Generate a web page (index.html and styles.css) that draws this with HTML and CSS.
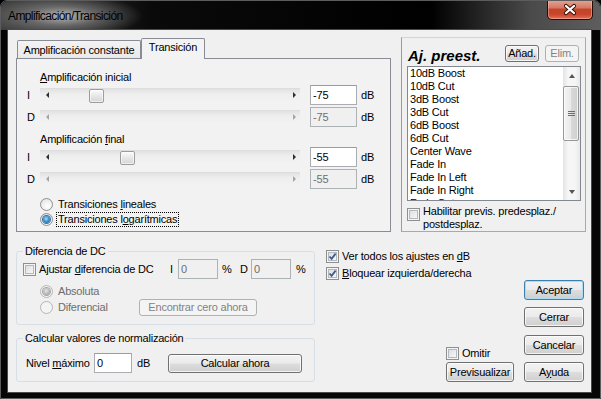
FILE: index.html
```html
<!DOCTYPE html>
<html>
<head>
<meta charset="utf-8">
<link rel="stylesheet" href="styles.css">
</head>
<body>
<div class="window">
  <div class="titlebar">
    <span class="title">Amplificación/Transición</span>
    <div class="close">
      <svg width="16" height="13" viewBox="0 0 16 13"><path d="M4 3 L12 10 M12 3 L4 10" stroke="#3a1208" stroke-width="4.2" stroke-linecap="round"/><path d="M4 3 L12 10 M12 3 L4 10" stroke="#ffffff" stroke-width="2.3" stroke-linecap="round"/></svg>
    </div>
  </div>
  <div class="client">
    <div class="top">
      <div class="tabctl">
        <div class="tabstrip">
          <div class="tab">Amplificación constante</div>
          <div class="tab sel">Transición</div>
        </div>
        <div class="pane">
          <div class="lbl"><u>A</u>mplificación inicial</div>
          <div class="srow">
            <span class="ch">I</span>
            <div class="track"><span class="arr l"></span><span class="thumb" style="left:49px"></span><span class="arr r"></span></div>
            <input class="edit" value="-75">
            <span class="unit">dB</span>
          </div>
          <div class="srow dis">
            <span class="ch">D</span>
            <div class="track"><span class="arr l"></span><span class="arr r"></span></div>
            <input class="edit" value="-75" disabled>
            <span class="unit">dB</span>
          </div>
          <div class="lbl lbl2">Amplificación <u>f</u>inal</div>
          <div class="srow">
            <span class="ch">I</span>
            <div class="track"><span class="arr l"></span><span class="thumb" style="left:80px"></span><span class="arr r"></span></div>
            <input class="edit" value="-55">
            <span class="unit">dB</span>
          </div>
          <div class="srow dis">
            <span class="ch">D</span>
            <div class="track"><span class="arr l"></span><span class="arr r"></span></div>
            <input class="edit" value="-55" disabled>
            <span class="unit">dB</span>
          </div>
          <div class="rrow first"><span class="rb"></span><span class="rtext">Transiciones <u>l</u>ineales</span></div>
          <div class="rrow"><span class="rb on"></span><span class="rtext focus">Transiciones l<u>o</u>garítmicas</span></div>
        </div>
      </div>
      <div class="preset">
        <div class="phead">
          <span class="ptitle">Aj. preest.</span>
          <button class="btn sm">Añad.</button>
          <button class="btn sm dis">Elim.</button>
        </div>
        <div class="listbox">
          <div class="items">
            <div>10dB Boost</div>
            <div>10dB Cut</div>
            <div>3dB Boost</div>
            <div>3dB Cut</div>
            <div>6dB Boost</div>
            <div>6dB Cut</div>
            <div>Center Wave</div>
            <div>Fade In</div>
            <div>Fade In Left</div>
            <div>Fade In Right</div>
            <div>Fade Out</div>
          </div>
          <div class="vscroll">
            <div class="sbtn"><span class="up"></span></div>
            <div class="sthumb"><span class="grip"></span></div>
            <div class="sfill"></div>
            <div class="sbtn"><span class="down"></span></div>
          </div>
        </div>
        <div class="cbrow multi"><span class="cb"><span class="cbi"></span></span><span class="cbtext">Habilitar previs. predesplaz./<br>postdesplaz.</span></div>
      </div>
    </div>
    <div class="bottom">
      <div class="groups">
        <fieldset class="grp dc">
          <legend>Diferencia de DC</legend>
          <div class="dcrow">
            <span class="cbrow dccheck"><span class="cb"><span class="cbi"></span></span><span class="cbtext">Ajustar <u>d</u>iferencia de DC</span></span>
            <span class="dcl">I</span>
            <input class="edit pct" value="0" disabled>
            <span class="pctl">%</span>
            <span class="dcd">D</span>
            <input class="edit pct" value="0" disabled>
            <span class="pctl2">%</span>
          </div>
          <div class="rrow dis r2"><span class="rb on"></span><span class="rtext">Absoluta</span></div>
          <div class="rrow dis r3"><span class="rb"></span><span class="rtext wide">Diferencial</span><button class="btn dis find">Encontrar cero ahora</button></div>
        </fieldset>
        <fieldset class="grp norm">
          <legend>Calcular valores de normalización</legend>
          <div class="nrow">
            <span class="nlabel">Nivel <u>m</u>áximo</span>
            <input class="edit nval" value="0">
            <span class="nunit">dB</span>
            <button class="btn calc">Calcular ahora</button>
          </div>
        </fieldset>
      </div>
      <div class="right">
        <div class="subcol">
          <div class="cbrow c1"><span class="cb"><span class="cbi"><svg width="9" height="9" viewBox="0 0 9 9"><path d="M1.5 4.5 L3.6 6.8 L7.6 1.6" fill="none" stroke="#3f5a8c" stroke-width="1.8"/></svg></span></span><span class="cbtext">Ver todos los ajustes en <u>d</u>B</span></div>
          <div class="cbrow c2"><span class="cb"><span class="cbi"><svg width="9" height="9" viewBox="0 0 9 9"><path d="M1.5 4.5 L3.6 6.8 L7.6 1.6" fill="none" stroke="#3f5a8c" stroke-width="1.8"/></svg></span></span><span class="cbtext"><u>B</u>loquear izquierda/derecha</span></div>
          <div class="preview">
            <div class="cbrow"><span class="cb"><span class="cbi"></span></span><span class="cbtext">Omitir</span></div>
            <button class="btn prev">Previsualizar</button>
          </div>
        </div>
        <div class="btncol">
          <button class="btn def">Aceptar</button>
          <button class="btn">Cerrar</button>
          <button class="btn b3">Cancelar</button>
          <button class="btn">A<u>y</u>uda</button>
        </div>
      </div>
    </div>
  </div>
</div>
</body>
</html>
```

FILE: styles.css
```css
* { box-sizing: border-box; }

body {
  margin: 0;
  background: #000;
  font-family: "Liberation Sans", Arial, sans-serif;
  font-size: 11px;
  letter-spacing: -0.2px;
  color: #000;
}

u { text-decoration: underline; text-underline-offset: 1px; }

.window {
  width: 601px;
  height: 399px;
  display: flex;
  flex-direction: column;
  background: #060606;
  border: 1px solid #5c5c5c;
  border-radius: 7px 7px 0 0;
  overflow: hidden;
}

.titlebar {
  height: 29px;
  flex: none;
  display: flex;
  align-items: flex-start;
  background:
    radial-gradient(ellipse 80px 22px at 62px 15px, rgba(205,205,205,0.85) 0%, rgba(150,150,150,0.55) 45%, rgba(0,0,0,0) 100%),
    linear-gradient(to right, #3c3c3c 0px, #0a0a0a 150px, #000 430px, #4a4a4a 530px, #5e5e5e 600px);
}

.title {
  padding-left: 7px;
  line-height: 30px;
  font-size: 12px;
  letter-spacing: -0.6px;
  color: #000;
  flex: 1;
}

.close {
  width: 46px;
  height: 20px;
  margin-top: -1px;
  margin-right: 7px;
  border: 1px solid #2a0a04;
  border-top: none;
  border-radius: 0 0 5px 5px;
  background: linear-gradient(#e6a595 0%, #d47a66 40%, #c3442a 50%, #c8452b 75%, #e07257 100%);
  box-shadow: inset 0 0 0 1px rgba(255,200,190,0.45);
  display: flex;
  align-items: center;
  justify-content: center;
}

.client {
  flex: 1;
  margin: 0 9px 6px 7px;
  background: #f0f0f0;
  box-shadow: 0 0 0 1px #4a4a4a;
  padding: 7px 0 0 8px;
}

/* ---------- top row ---------- */
.top {
  display: flex;
  gap: 10px;
  height: 195px;
}

.tabctl {
  width: 375px;
  display: flex;
  flex-direction: column;
}

.tabstrip {
  height: 21px;
  display: flex;
  align-items: flex-end;
  padding-left: 1px;
  position: relative;
  z-index: 1;
}

.tab {
  height: 18px;
  width: 124px;
  border: 1px solid #898c95;
  border-bottom: none;
  border-radius: 2px 2px 0 0;
  background: linear-gradient(#f3f3f3, #e9e9e9);
  text-align: center;
  line-height: 17px;
  padding-top: 1px;
}

.tab.sel {
  width: 64px;
  height: 21px;
  margin-bottom: -1px;
  background: #f3f3f3;
  line-height: 17px;
  padding-top: 0;
}

.pane {
  flex: 1;
  border: 1px solid #898c95;
  background: #f2f2f2;
  padding-top: 12px;
}

.lbl {
  padding-left: 23px;
  line-height: 13px;
  height: 13px;
}
.lbl2 { margin-top: 5px; }

.srow {
  height: 22px;
  display: flex;
  align-items: center;
}

.ch {
  width: 23px;
  padding-left: 10px;
}

.track {
  width: 260px;
  height: 15px;
  position: relative;
  background: linear-gradient(#e2e2e2, #eeeeee 35%, #f3f3f3);
  border-top: 1px solid #dddddd;
}

.arr {
  position: absolute;
  top: 3px;
  width: 0;
  height: 0;
  border-top: 3px solid transparent;
  border-bottom: 3px solid transparent;
}
.arr.l { left: 6px; border-right: 3px solid #2e2e2e; }
.arr.r { right: 4px; border-left: 3px solid #2e2e2e; }
.dis .arr.l { border-right-color: #a5a5a5; }
.dis .arr.r { border-left-color: #a5a5a5; }

.thumb {
  position: absolute;
  top: 0;
  width: 15px;
  height: 14px;
  border: 1px solid #9c9c9c;
  border-radius: 2px;
  background: linear-gradient(#fbfbfb, #e6e6e6 50%, #d6d6d6);
  box-shadow: inset 0 0 0 1px rgba(255,255,255,0.6);
}

.edit {
  font: inherit;
  letter-spacing: inherit;
  color: #000;
  width: 47px;
  height: 20px;
  margin: 0 0 0 10px;
  padding: 0 0 0 2px;
  border: 1px solid #abadb3;
  border-top-color: #9a9ca2;
  background: #fff;
  outline: none;
}
.edit:disabled {
  background: #f0f0f0;
  color: #6d6d6d;
  border-color: #adb2b5;
}

.unit { margin-left: 4px; }

.rrow {
  height: 15px;
  display: flex;
  align-items: center;
  padding-left: 23px;
}
.rrow.first { margin-top: 7px; }

.rb {
  width: 13px;
  height: 13px;
  flex: none;
  border-radius: 50%;
  border: 1px solid #8e8f8f;
  background: radial-gradient(circle at 60% 65%, #ffffff 0%, #f1f1f1 45%, #d9d9d9 100%);
  display: flex;
  align-items: center;
  justify-content: center;
}
.rb.on::after {
  content: "";
  width: 7px;
  height: 7px;
  border-radius: 50%;
  background: radial-gradient(circle at 45% 40%, #a9e2fb 0%, #3b97d6 45%, #13508d 100%);
  box-shadow: 0 0 0 1px #3e6e96;
}
.dis .rb { border-color: #b5b5b5; background: #f4f4f4; }
.dis .rb.on::after {
  background: radial-gradient(circle at 45% 40%, #e6e6e6 0%, #b8b8b8 55%, #8f8f8f 100%);
  box-shadow: 0 0 0 1px #a6a6a6;
}

.rtext {
  margin-left: 3px;
  padding: 0 1px;
  line-height: 13px;
  border: 1px solid transparent;
}
.rtext.focus { border: 1px dotted #000; }
.dis .rtext { color: #6d6d6d; }

/* ---------- preset group ---------- */
.preset {
  width: 185px;
  border: 1px solid #a9a9a9;
  border-top-color: #d4d4d4;
  border-left-color: #9a9a9a;
  padding: 0 4px 0 5px;
}

.phead {
  height: 18px;
  margin-top: 6px;
  display: flex;
  align-items: center;
}

.ptitle {
  flex: 1;
  font-size: 15px;
  font-weight: bold;
  font-style: italic;
  letter-spacing: 0;
  line-height: 15px;
  padding-top: 4px;
  padding-left: 1px;
}

.btn {
  font: inherit;
  letter-spacing: inherit;
  color: #000;
  height: 20px;
  padding: 0;
  border: 1px solid #707070;
  border-radius: 3px;
  background: linear-gradient(#f2f2f2 0%, #ebebeb 48%, #dddddd 52%, #cfcfcf 100%);
  box-shadow: inset 0 0 0 1px rgba(255,255,255,0.75);
  text-align: center;
}
.btn.dis {
  color: #838383;
  border-color: #adb2b5;
  background: #f4f4f4;
  box-shadow: none;
}
.btn.sm {
  width: 34px;
  height: 17px;
  line-height: 13px;
}
.btn.sm + .btn.sm { margin-left: 6px; margin-right: 2px; }

.listbox {
  margin-top: 4px;
  width: 174px;
  height: 135px;
  border: 1px solid #828790;
  background: #fff;
  display: flex;
  overflow: hidden;
}

.items {
  flex: 1;
  padding-left: 2px;
  line-height: 13px;
  overflow: hidden;
}

.vscroll {
  width: 17px;
  flex: none;
  display: flex;
  flex-direction: column;
  background: linear-gradient(to right, #e3e3e3, #f6f6f6 30%, #f6f6f6 70%, #e8e8e8);
}

.sbtn {
  height: 17px;
  display: flex;
  align-items: center;
  justify-content: center;
  flex: none;
}
.up, .down {
  width: 0;
  height: 0;
  border-left: 3.5px solid transparent;
  border-right: 3.5px solid transparent;
}
.up { border-bottom: 4px solid #555; }
.down { border-top: 4px solid #555; }

.sthumb {
  margin: 2px 1px 0 0;
  height: 55px;
  border: 1px solid #979797;
  border-radius: 2px;
  background: linear-gradient(to right, #f4f4f4, #e9e9e9 50%, #d9d9d9 51%, #cfcfcf);
  box-shadow: inset 0 0 0 1px rgba(255,255,255,0.7);
  display: flex;
  align-items: center;
  justify-content: center;
}
.grip {
  width: 7px;
  height: 5px;
  border-top: 1px solid #6d6d6d;
  border-bottom: 1px solid #6d6d6d;
  position: relative;
}
.grip::after {
  content: "";
  position: absolute;
  left: 0;
  right: 0;
  top: 1px;
  border-top: 1px solid #6d6d6d;
}
.sfill { flex: 1; }

/* ---------- checkboxes ---------- */
.cbrow {
  display: flex;
  align-items: center;
}

.cb {
  width: 13px;
  height: 13px;
  flex: none;
  border: 1px solid #8e8f8f;
  background: #f4f4f4;
  padding: 1px;
}
.cbi {
  display: flex;
  width: 9px;
  height: 9px;
  border: 1px solid #b5b9be;
  background: linear-gradient(135deg, #dcdfe3, #f7f7f7);
  align-items: center;
  justify-content: center;
}
.cbi svg { display: block; margin: -1px; }

.cbtext {
  margin-left: 3px;
  line-height: 13px;
}

.cbrow.multi {
  align-items: flex-start;
  margin-top: 4px;
}
.cbrow.multi .cb { margin-top: 3px; }

/* ---------- bottom ---------- */
.bottom {
  display: flex;
  margin-top: 12px;
  height: 138px;
}

.groups {
  width: 299px;
  display: flex;
  flex-direction: column;
}

.grp {
  margin: 0;
  padding: 0;
  border: 1px solid #d5dfe5;
  border-radius: 3px;
  min-width: 0;
}
.grp legend {
  margin-left: 6px;
  padding: 0 2px;
  line-height: 14px;
}

.dcrow {
  margin-top: 1px;
  height: 20px;
  display: flex;
  align-items: center;
  padding-left: 6px;
}
.dccheck { width: 147px; }
.dcl { width: 8px; }
.edit.pct { width: 40px; margin-left: 0; }
.pctl { margin-left: 4px; width: 18px; }
.dcd { width: 11px; }
.pctl2 { margin-left: 5px; }

.rrow.r2 { margin-top: 5px; }
.rrow.r3 { height: 17px; }
.rtext.wide { width: 83px; }
.btn.find {
  width: 118px;
  height: 17px;
  line-height: 13px;
}

.grp.dc { padding-bottom: 8px; }

.grp.norm {
  margin-top: 6px;
  padding-bottom: 8px;
}
.nrow {
  margin-top: 8px;
  height: 20px;
  display: flex;
  align-items: center;
  padding-left: 9px;
}
.nlabel { width: 68px; }
.edit.nval { width: 38px; margin-left: 0; }
.nunit { margin-left: 5px; width: 31px; }
.btn.calc { width: 134px; height: 19px; }

.right {
  flex: 1;
  margin-left: 5px;
  display: flex;
}

.subcol {
  flex: 1;
  display: flex;
  flex-direction: column;
}
.cbrow.c1 { margin-top: 5px; height: 14px; padding-left: 6px; }
.cbrow.c2 { margin-top: 3px; height: 14px; padding-left: 6px; }

.preview {
  margin-top: auto;
  align-self: flex-end;
  margin-right: 10px;
  width: 68px;
  display: flex;
  flex-direction: column;
}
.preview .cbrow { height: 14px; }
.btn.prev { margin-top: 2px; width: 68px; }

.btncol {
  width: 60px;
  margin-right: 7px;
  padding-top: 36px;
  display: flex;
  flex-direction: column;
  gap: 7px;
}
.btncol .btn { width: 60px; }
.btncol .b3 { margin-top: 1px; }
.btn.def {
  border-color: #3c7fb1;
  box-shadow: inset 0 0 0 1px #a9dcf5;
}
```
